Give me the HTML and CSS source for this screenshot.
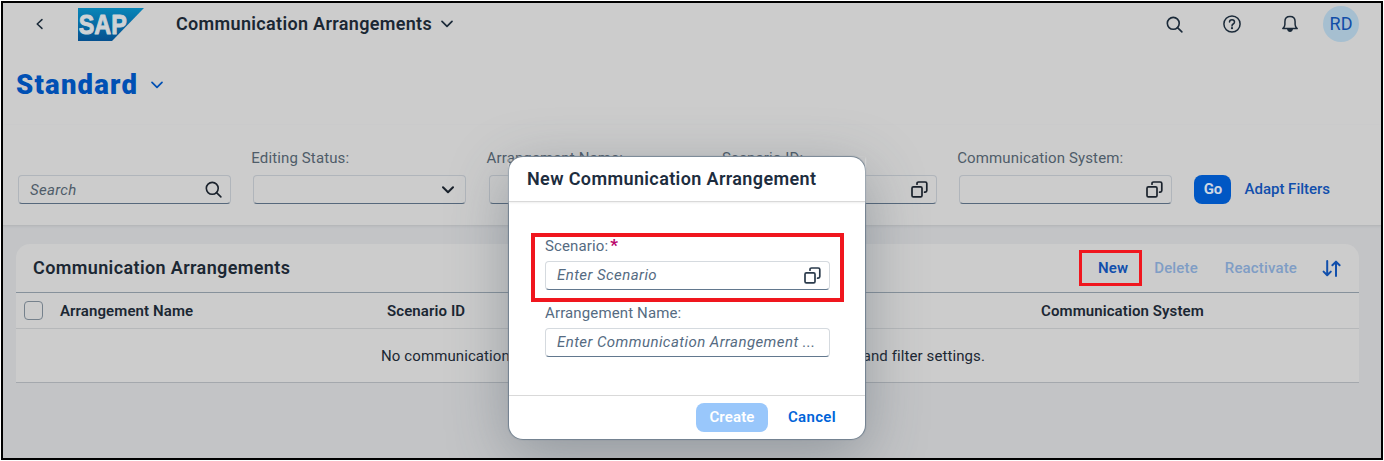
FILE: index.html
```
<!DOCTYPE html>
<html lang="en">
<head>
<meta charset="utf-8">
<title>Communication Arrangements</title>
<link rel="stylesheet" href="styles.css">
</head>
<body>
<svg width="0" height="0" class="defs">
  <symbol id="search" viewBox="0 0 18 18"><circle cx="7.7" cy="7.8" r="6.3"/><path d="M12.2 12.3l4.6 4.5"/></symbol>
  <symbol id="down" viewBox="0 0 12 8"><path d="M1 1.3l5 5 5-5"/></symbol>
  <symbol id="copy" viewBox="0 0 17 17"><rect x="1" y="5.8" width="10" height="10" rx="1.4"/><path d="M6 3.2V2.6Q6 1 7.6 1H14.2Q15.8 1 15.8 2.6V9.6Q15.8 11.2 14.2 11.2H13.6"/></symbol>
</svg>
<div class="frame">
  <header class="shell">
    <svg class="back" viewBox="0 0 8 12"><path d="M6.8 1L1.4 6l5.4 5"/></svg>
    <svg class="logo" viewBox="0 0 66 33">
      <defs><linearGradient id="sap" x1="0" y1="0" x2="0" y2="1"><stop offset="0" stop-color="#0886b8"/><stop offset="1" stop-color="#05508f"/></linearGradient></defs>
      <path d="M0 0H66L34 33H0z" fill="url(#sap)"/>
      <text x="0.8" y="26" textLength="48" lengthAdjust="spacingAndGlyphs">SAP</text>
    </svg>
    <h1 class="app-title">Communication Arrangements</h1>
    <svg class="chev title-chev"><use href="#down"/></svg>
    <div class="shell-actions">
      <svg class="ico16"><use href="#search"/></svg>
      <svg class="ico18" viewBox="0 0 18 18"><circle cx="9" cy="9" r="8.1"/><path d="M6.5 7.1Q6.5 4.7 9 4.7T11.5 7Q11.5 8.3 10.2 9Q9 9.7 9 10.9"/><circle class="dot" cx="9" cy="13.2" r="1.1"/></svg>
      <svg class="ico18 bell" viewBox="0 0 18 18"><path d="M1.8 13.6Q3.9 12 3.9 9.6V6.8Q3.9 1.6 9 1.6T14.1 6.8V9.6Q14.1 12 16.2 13.6z"/><path class="dot" d="M6 14h6Q11.4 17 9 17T6 14z"/></svg>
      <span class="avatar">RD</span>
    </div>
  </header>
  <div class="variant"><span>Standard</span><svg class="chev"><use href="#down"/></svg></div>
  <section class="filters">
    <div class="field"><label class="label">&nbsp;</label><div class="input"><span class="placeholder">Search</span><svg class="ico17"><use href="#search"/></svg></div></div>
    <div class="field"><label class="label">Editing Status:</label><div class="input"><svg class="chev dark"><use href="#down"/></svg></div></div>
    <div class="field"><label class="label">Arrangement Name:</label><div class="input"><svg class="ico17"><use href="#copy"/></svg></div></div>
    <div class="field"><label class="label">Scenario ID:</label><div class="input"><svg class="ico17"><use href="#copy"/></svg></div></div>
    <div class="field"><label class="label">Communication System:</label><div class="input"><svg class="ico17"><use href="#copy"/></svg></div></div>
    <button class="go">Go</button>
    <span class="adapt">Adapt Filters</span>
  </section>
  <main class="content">
    <section class="card">
      <div class="toolbar">
        <h2 class="card-title">Communication Arrangements</h2>
        <span class="action new">New<i class="marker"></i></span>
        <span class="action off delete">Delete</span>
        <span class="action off reactivate">Reactivate</span>
        <svg class="sort" viewBox="0 0 19 17"><path d="M5.2 1v14M1.6 11.6l3.6 3.6 3.6-3.6M14 16V2M10.4 5.2L14 1.6l3.6 3.6"/></svg>
      </div>
      <div class="row head"><span class="check"></span><span>Arrangement Name</span><span>Scenario ID</span><span>Communication System</span></div>
      <div class="row empty"><span>No communication</span><span>and filter settings.</span></div>
    </section>
  </main>
  <div class="dialog">
    <h2 class="dialog-title">New Communication Arrangement</h2>
    <div class="dialog-body">
      <label class="label">Scenario:<b class="req">*</b></label>
      <div class="input"><span class="placeholder">Enter Scenario</span><svg class="ico17"><use href="#copy"/></svg></div>
      <label class="label second">Arrangement Name:</label>
      <div class="input"><span class="placeholder">Enter Communication Arrangement ...</span></div>
      <i class="marker"></i>
    </div>
    <footer class="dialog-foot"><button class="create">Create</button><span class="cancel">Cancel</span></footer>
  </div>
</div>
</body>
</html>
```

FILE: styles.css
```
* { box-sizing: border-box; }
body { margin: 0; padding: 1px; background: #fff; font: 15px/18px Roboto, "Noto Sans", sans-serif; color: #1b2733; white-space: nowrap; }
h1, h2 { margin: 0; font-weight: 600; font-size: 18px; line-height: 22px; }
.defs { display: block; position: absolute; }
svg { display: block; flex: none; fill: none; stroke: #1b2a39; stroke-width: 1.7; stroke-linecap: round; stroke-linejoin: round; }
button { border: 0; padding: 0 0 1px; font: inherit; height: 29px; border-radius: 8px; }

.frame { position: relative; width: 1382px; height: 459px; border: 2px solid #000; background: #c3c4c6; overflow: hidden; display: flex; flex-direction: column; }

.shell { display: flex; align-items: center; height: 42px; flex: none; background: #ccc; padding-left: 33px; }
.back { width: 7px; height: 12px; }
.logo { width: 66px; height: 33px; margin-left: 35px; stroke: none; }
.logo text { font: 900 28.5px "Liberation Sans", sans-serif; fill: #ced2d5; stroke: #ced2d5; stroke-width: 1; }
.app-title { margin-left: 32px; width: 265px; letter-spacing: .33px; }
.chev { width: 12px; height: 8px; }
.shell-actions { display: flex; align-items: center; margin-left: auto; padding-right: 22px; }
.ico16 { width: 17px; height: 17px; margin-right: 40px; }
.ico18 { width: 18px; height: 18px; margin-right: 40px; stroke-width: 1.5; }
.bell { margin-right: 24px; }
.dot { fill: #1b2a39; stroke: none; }
.avatar { width: 36px; height: 36px; border-radius: 50%; background: #a6bfd0; color: #114ea8; font-size: 18px; line-height: 36px; text-align: center; }

.variant { display: flex; align-items: center; gap: 13px; height: 80px; flex: none; background: #ccc; padding: 0 0 1px 13px; color: #0050b4; font-size: 27.5px; font-weight: 900; line-height: 34px; letter-spacing: 1.2px; }
.variant .chev { stroke: #0050b4; }

.filters { display: flex; align-items: flex-end; height: 101px; flex: none; background: #ccc; padding: 0 0 21px 15px; border-bottom: 1px solid #b6b8ba; box-shadow: 0 1px 2px #b9bbbd; }
.field { width: 213px; margin-right: 22.3px; }
.label { display: block; margin: 0 0 8px -2px; color: #4f5c69; letter-spacing: .13px; }
.input { display: flex; align-items: center; height: 29px; border: 1px solid #b0b5bb; border-bottom: 1.5px solid #56687c; border-radius: 4px; padding: 0 8px 0 11px; }
.input svg { margin-left: auto; stroke: #1a222c; }
.ico17 { width: 17px; height: 17px; }
.input .dark { margin-right: 3px; stroke-width: 2; }
.placeholder { font-style: italic; color: #4f5c69; letter-spacing: .3px; }
.go { width: 37px; background: #0057c4; color: #ccd6e3; font-weight: 700; }
.adapt { margin-left: 13px; line-height: 29px; font-weight: 500; color: #114fac; }

.content { padding: 18px 22px 0 13px; }
.card { border-radius: 14px 14px 0 0; background: #ccc; }
.toolbar { display: flex; align-items: center; height: 49px; padding-left: 17px; border-bottom: 1px solid #86919b; }
.card-title { letter-spacing: .38px; }
.action { position: relative; font-weight: 500; color: #114fac; letter-spacing: .15px; }
.new { margin-left: auto; font-weight: 600; }
.off { color: #7f9dc5; }
.delete { margin-left: 26px; }
.reactivate { margin: 0 25px 0 27px; }
.sort { width: 19px; height: 17px; margin-right: 18px; stroke: #114fac; stroke-width: 2; }
.marker { position: absolute; border: 4px solid #f0161e; }
.new .marker { left: -19px; top: -9px; width: 63px; height: 36px; border-width: 3.5px; }
.row { display: flex; align-items: center; border-bottom: 1px solid #b6b8ba; }
.head { display: grid; grid-template-columns: 36px 327px 654px 1fr; height: 36px; padding-left: 8px; font-weight: 600; color: #1b2733; letter-spacing: .1px; }
.check { width: 19px; height: 19px; border: 1px solid #75818c; border-radius: 4px; }
.empty { height: 54px; padding: 0 374px 0 365px; justify-content: space-between; border-bottom-color: #a4a8ad; letter-spacing: .1px; }

.dialog { position: absolute; left: 506px; top: 154px; width: 356px; height: 282px; border-radius: 14px; background: #fff; color: #1d2d3e; box-shadow: 0 0 1px 1px #6f7f8e, 0 16px 60px rgba(60, 75, 90, .38); display: flex; flex-direction: column; }
.dialog-title { height: 45px; flex: none; padding-left: 18px; line-height: 44px; letter-spacing: .38px; border-bottom: 1px solid #d9d9d9; box-shadow: 0 1px 2px #eee; }
.dialog-body { position: relative; flex: 1; padding: 35px 35px 0 36px; }
.dialog .label { height: 18px; color: #556b82; margin: 0 0 6px; }
.dialog .second { margin: 14px 0 6px; }
.dialog .input { border-color: #d5dadf #d5dadf #62788e; background: #fff; padding-bottom: 1px; }
.dialog .input svg { stroke: #2b3b4c; }
.dialog .placeholder { color: #556b82; letter-spacing: .43px; }
.req { color: #ba066c; margin-left: 2px; font-size: 17px; line-height: 1; }
.dialog-body .marker { left: 22px; top: 31px; width: 313px; height: 69px; }
.dialog-foot { display: flex; align-items: center; height: 44px; flex: none; border-top: 1px solid #d9d9d9; padding: 0 0 0 187px; }
.create { width: 72px; background: #99c7fb; color: #fff; font-weight: 600; letter-spacing: .15px; }
.cancel { margin-left: 20px; padding-bottom: 1px; color: #0064d9; font-weight: 600; letter-spacing: .3px; }
```
